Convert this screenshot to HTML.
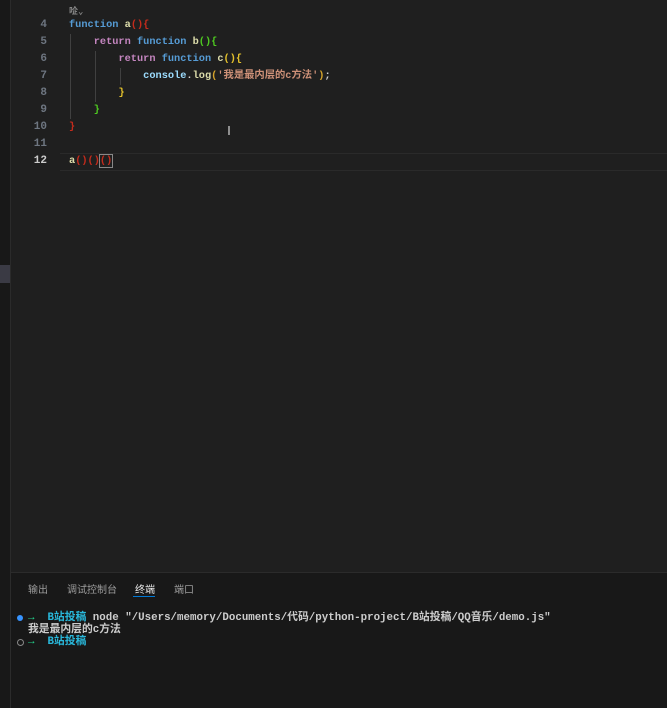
<!DOCTYPE html>
<html><head><meta charset="utf-8"><style>
body{margin:0;width:667px;height:708px;background:#1f1f1f;overflow:hidden;position:relative;font-family:"Liberation Mono","Noto Sans CJK SC",monospace;font-weight:bold}
.strip{position:absolute;left:0;top:0;width:10px;height:708px;background:#181818;border-right:1px solid #2b2b2b}
.thumb{position:absolute;left:0;top:265px;width:10px;height:18px;background:#3a3a44}
.ln{position:absolute;left:20px;width:27px;text-align:right;color:#6e7681;font-size:11px;line-height:14px}
.code{position:absolute;left:69px;font-size:10.3px;line-height:14px;white-space:pre;color:#d4d4d4}
.k{color:#569cd6}.r{color:#c586c0}.f{color:#dcdcaa}.s{color:#ce9178}.v{color:#9cdcfe}
.cur{position:absolute;left:60px;right:0;top:153px;height:16px;border-top:1px solid #2a2a2a;border-bottom:1px solid #2a2a2a}
.g{position:absolute;width:1px;background:#404040}
.panel{position:absolute;left:11px;right:0;top:572px;bottom:0;background:#181818;border-top:1px solid #2b2b2b}
.tab{position:absolute;top:581px;font-family:"Liberation Sans","Noto Sans CJK SC",sans-serif;font-weight:normal;font-size:10px;color:#9d9d9d}
.t{position:absolute;left:28px;font-size:10.8px;line-height:13px;color:#cccccc;white-space:pre}
</style></head><body>
<div class="strip"></div><div class="thumb"></div>
<div class="cur"></div>
<div style="position:absolute;left:69px;top:4px;font-size:9px;color:#888">㖉⌄</div>
<div class="g" style="left:70px;top:34px;height:85px"></div>
<div class="g" style="left:95px;top:51px;height:51px"></div>
<div class="g" style="left:120px;top:68px;height:17px"></div>
<div class="ln" style="top:18px">4</div><div class="ln" style="top:35px">5</div><div class="ln" style="top:52px">6</div><div class="ln" style="top:69px">7</div><div class="ln" style="top:86px">8</div><div class="ln" style="top:103px">9</div><div class="ln" style="top:120px">10</div><div class="ln" style="top:137px">11</div><div class="ln" style="top:154px;color:#ccc">12</div>
<div class="code" style="top:18px"><span class="k">function</span> <span class="f">a</span><span style="color:#c42b1c">(){</span></div>
<div class="code" style="top:35px">    <span class="r">return</span> <span class="k">function</span> <span class="f">b</span><span style="color:#4ec920">(){</span></div>
<div class="code" style="top:52px">        <span class="r">return</span> <span class="k">function</span> <span class="f">c</span><span style="color:#e2c02b">(){</span></div>
<div class="code" style="top:69px">            <span class="v">console</span>.<span class="f">log</span><span style="color:#d4a32a">(</span><span class="s">'我是最内层的c方法'</span><span style="color:#d4a32a">)</span>;</div>
<div class="code" style="top:86px">        <span style="color:#e2c02b">}</span></div>
<div class="code" style="top:103px">    <span style="color:#4ec920">}</span></div>
<div class="code" style="top:120px"><span style="color:#c42b1c">}</span></div>
<div class="code" style="top:154px"><span class="f">a</span><span style="color:#c42b1c">()()</span><span style="color:#c42b1c;outline:1px solid #888">()</span></div>
<div style="position:absolute;left:223px;top:122px;color:#ddd;font-size:12px;font-weight:normal">Ⅰ</div>
<div class="panel"></div>
<div class="tab" style="left:28px">输出</div>
<div class="tab" style="left:67px">调试控制台</div>
<div class="tab" style="left:135px;color:#e7e7e7">终端</div>
<div style="position:absolute;left:133px;top:596px;width:22px;height:1px;background:#0078d4"></div>
<div class="tab" style="left:174px">端口</div>
<div style="position:absolute;left:17px;top:615px;width:6px;height:6px;border-radius:50%;background:#3794ff"></div>
<div style="position:absolute;left:17px;top:639px;width:5px;height:5px;border-radius:50%;border:1px solid #888"></div>
<div class="t" style="top:612px"><span style="color:#23d18b">→</span>  <span style="color:#29b8db">B站投稿</span> node "/Users/memory/Documents/代码/python-project/B站投稿/QQ音乐/demo.js"</div>
<div class="t" style="top:624px">我是最内层的c方法</div>
<div class="t" style="top:636px"><span style="color:#23d18b">→</span>  <span style="color:#29b8db">B站投稿</span></div>
</body></html>
